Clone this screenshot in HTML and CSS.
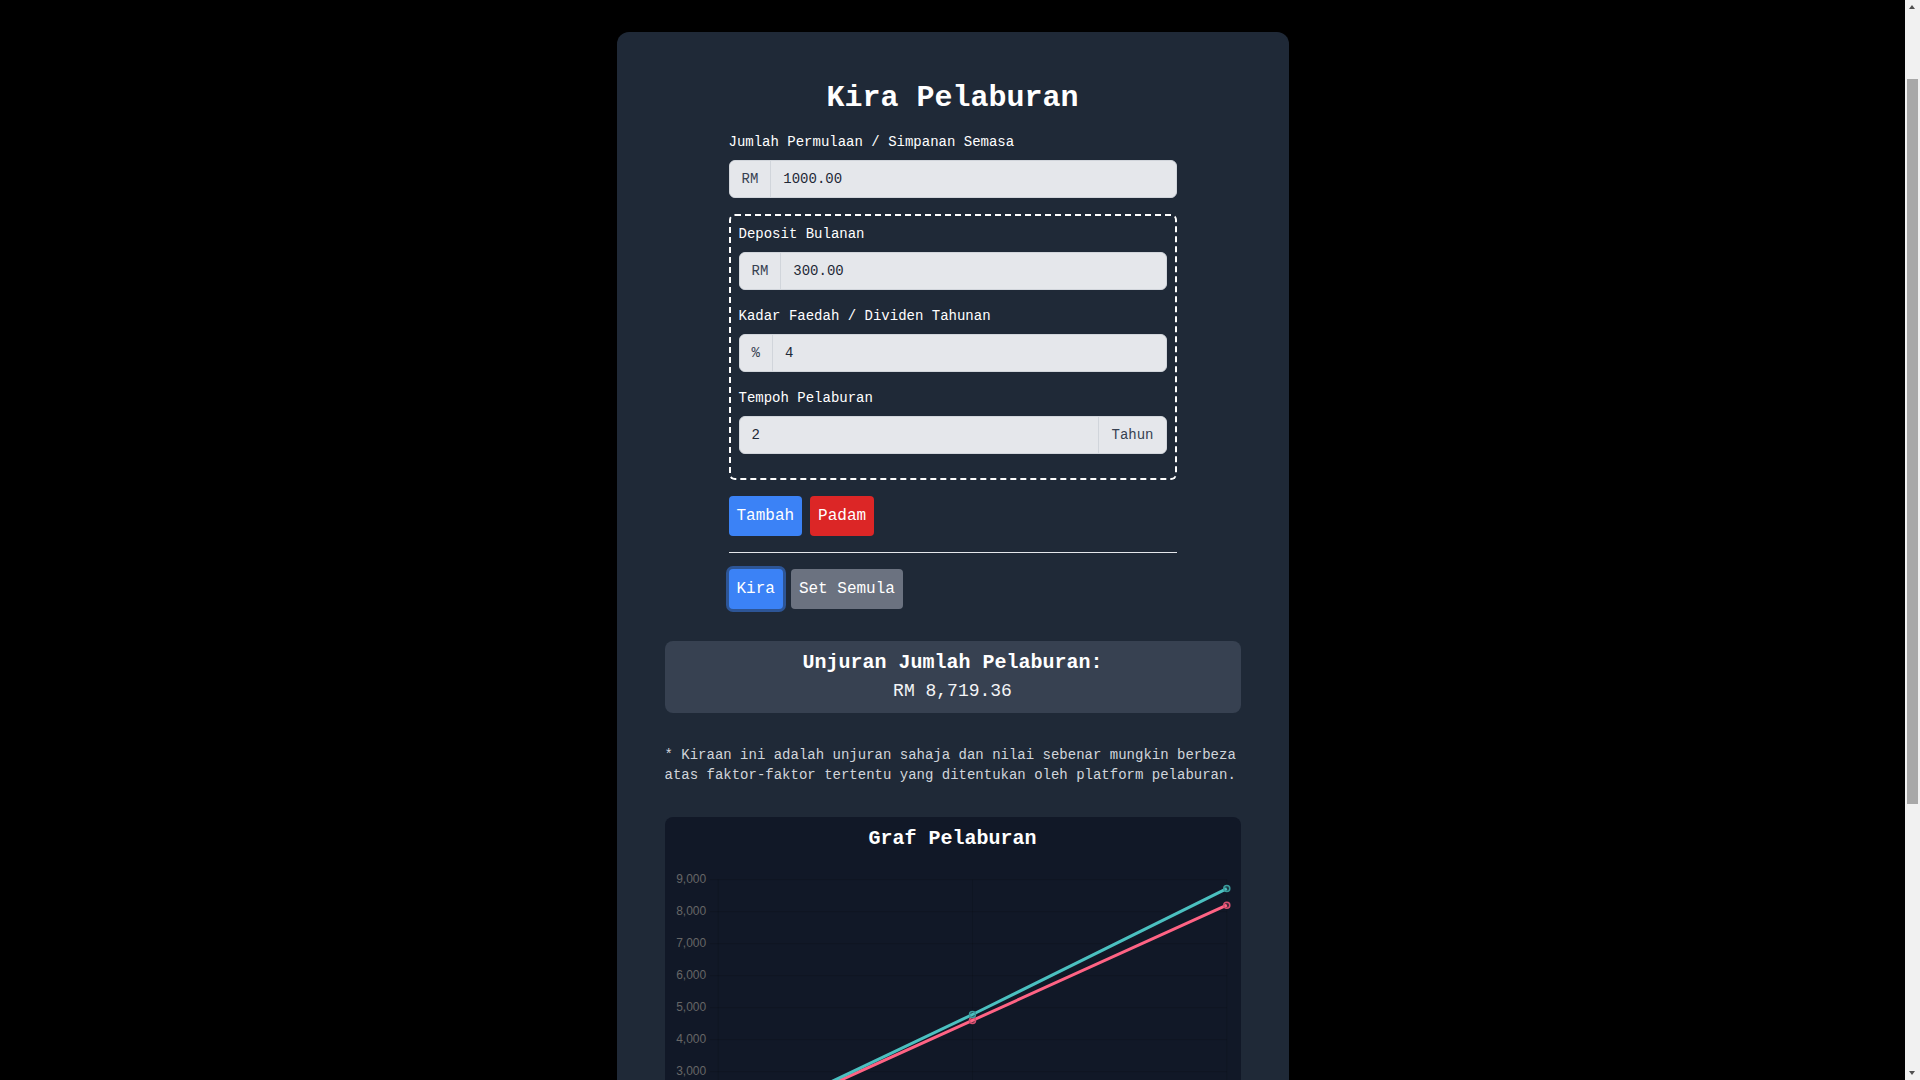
FILE: index.html
```html
<!DOCTYPE html>
<html lang="ms">
<head>
<meta charset="utf-8">
<title>Kira Pelaburan</title>
<link rel="stylesheet" href="styles.css">
</head>
<body>
<main class="card">
  <h1 class="title">Kira Pelaburan</h1>
  <div class="form">
    <div class="field">
      <label class="label">Jumlah Permulaan / Simpanan Semasa</label>
      <div class="group"><span class="addon addon-left">RM</span><input class="input" type="text" value="1000.00"></div>
    </div>
    <div class="dashed">
      <div class="field">
        <label class="label">Deposit Bulanan</label>
        <div class="group"><span class="addon addon-left">RM</span><input class="input" type="text" value="300.00"></div>
      </div>
      <div class="field">
        <label class="label">Kadar Faedah / Dividen Tahunan</label>
        <div class="group"><span class="addon addon-left">%</span><input class="input" type="text" value="4"></div>
      </div>
      <div class="field">
        <label class="label">Tempoh Pelaburan</label>
        <div class="group"><input class="input" type="text" value="2"><span class="addon addon-right">Tahun</span></div>
      </div>
    </div>
    <div class="btn-row">
      <button class="btn btn-blue">Tambah</button>
      <button class="btn btn-red">Padam</button>
    </div>
    <hr class="divider">
    <div class="btn-row">
      <button class="btn btn-blue btn-focus">Kira</button>
      <button class="btn btn-gray">Set Semula</button>
    </div>
  </div>

  <section class="result">
    <h2 class="result-title">Unjuran Jumlah Pelaburan:</h2>
    <p class="result-value">RM 8,719.36</p>
  </section>

  <p class="note">* Kiraan ini adalah unjuran sahaja dan nilai sebenar mungkin berbeza atas faktor-faktor tertentu yang ditentukan oleh platform pelaburan.</p>

  <section class="chart">
    <h2 class="chart-title">Graf Pelaburan</h2>
    <svg class="chart-svg" width="576" height="345" viewBox="0 0 576 345">
      <g stroke="rgba(0,0,0,0.12)" stroke-width="1">
        <line x1="45" y1="30.6" x2="561.8" y2="30.6"/>
        <line x1="45" y1="62.6" x2="561.8" y2="62.6"/>
        <line x1="45" y1="94.6" x2="561.8" y2="94.6"/>
        <line x1="45" y1="126.6" x2="561.8" y2="126.6"/>
        <line x1="45" y1="158.6" x2="561.8" y2="158.6"/>
        <line x1="45" y1="190.6" x2="561.8" y2="190.6"/>
        <line x1="45" y1="222.6" x2="561.8" y2="222.6"/>
        <line x1="45" y1="254.6" x2="561.8" y2="254.6"/>
        <line x1="45" y1="286.6" x2="561.8" y2="286.6"/>
        <line x1="45" y1="318.6" x2="561.8" y2="318.6"/>
        <line x1="53.2" y1="30.6" x2="53.2" y2="326.6"/>
        <line x1="307.5" y1="30.6" x2="307.5" y2="326.6"/>
        <line x1="561.8" y1="30.6" x2="561.8" y2="326.6"/>
      </g>
      <g class="tick" text-anchor="end">
        <text x="41.2" y="34">9,000</text>
        <text x="41.2" y="66">8,000</text>
        <text x="41.2" y="98">7,000</text>
        <text x="41.2" y="130">6,000</text>
        <text x="41.2" y="162">5,000</text>
        <text x="41.2" y="194">4,000</text>
        <text x="41.2" y="226">3,000</text>
        <text x="41.2" y="258">2,000</text>
        <text x="41.2" y="290">1,000</text>
        <text x="41.2" y="322">0</text>
      </g>
      <g class="tick" text-anchor="middle">
        <text x="53.2" y="340">Tahun 0</text>
        <text x="307.5" y="340">Tahun 1</text>
        <text x="561.8" y="340">Tahun 2</text>
      </g>
      <polyline points="53.2,286.6 307.5,171.4 561.8,56.2" fill="none" stroke="rgb(255,99,132)" stroke-width="3"/>
      <polyline points="53.2,286.6 307.5,165.5 561.8,39.6" fill="none" stroke="rgb(75,192,192)" stroke-width="3"/>
      <g fill="rgba(255,99,132,0.2)" stroke="rgb(214,80,112)" stroke-width="1.5">
        <circle cx="53.2" cy="286.6" r="3"/>
        <circle cx="307.5" cy="171.4" r="3"/>
        <circle cx="561.8" cy="56.2" r="3"/>
      </g>
      <g fill="rgba(75,192,192,0.2)" stroke="rgb(58,156,156)" stroke-width="1.5">
        <circle cx="53.2" cy="286.6" r="3"/>
        <circle cx="307.5" cy="165.5" r="3"/>
        <circle cx="561.8" cy="39.6" r="3"/>
      </g>
    </svg>
  </section>
</main>

<div class="scrollbar" aria-hidden="true">
  <span class="sb-arrow sb-up"></span>
  <span class="sb-thumb"></span>
  <span class="sb-arrow sb-down"></span>
</div>
</body>
</html>
```

FILE: styles.css
```css
* {
  box-sizing: border-box;
}

html, body {
  margin: 0;
  background: #000000;
}

body {
  padding: 32px 15px 216px 0;
  font-family: "Liberation Mono", "DejaVu Sans Mono", monospace;
  color: #ffffff;
}

.card {
  width: 672px;
  margin: 0 auto;
  background: #1f2937;
  border-radius: 12px;
  padding: 48px;
}

.title {
  margin: 0 0 16px;
  font-size: 30px;
  line-height: 36px;
  font-weight: 700;
  text-align: center;
  color: #ffffff;
}

.form {
  width: 448px;
  margin: 0 auto;
}

.field {
  margin-bottom: 16px;
}

.label {
  display: block;
  margin-bottom: 8px;
  font-size: 14px;
  line-height: 20px;
  color: #ffffff;
}

.group {
  display: flex;
  align-items: stretch;
  background: #e5e7eb;
  border: 1px solid #d1d5db;
  border-radius: 6px;
  overflow: hidden;
}

.addon {
  flex: none;
  padding: 8px 12px;
  font-size: 14px;
  line-height: 20px;
  color: #374151;
  background: #e5e7eb;
}

.addon-left {
  border-right: 1px solid #d1d5db;
}

.addon-right {
  border-left: 1px solid #d1d5db;
}

.input {
  flex: 1;
  min-width: 0;
  margin: 0;
  border: 0;
  outline: none;
  background: transparent;
  padding: 8px 12px;
  font: inherit;
  font-size: 14px;
  line-height: 20px;
  height: 36px;
  color: #1f2937;
}

.dashed {
  border: 2px dashed #ffffff;
  border-radius: 6px;
  padding: 8px;
  margin-bottom: 16px;
}

.btn-row {
  display: flex;
  gap: 8px;
}

.btn {
  border: 0;
  margin: 0;
  border-radius: 4px;
  padding: 8px;
  font-family: inherit;
  font-size: 16px;
  line-height: 24px;
  color: #ffffff;
  cursor: pointer;
}

.btn-blue {
  background: #3b82f6;
}

.btn-red {
  background: #dc2626;
}

.btn-gray {
  background: #6b7280;
}

.btn-focus {
  box-shadow: 0 0 0 3px rgba(59, 130, 246, 0.5);
}

.divider {
  margin: 16px 0;
  border: 0;
  border-top: 1px solid #e5e7eb;
  height: 0;
}

.result {
  margin-top: 32px;
  background: #374151;
  border-radius: 8px;
  padding: 8px 16px;
  text-align: center;
}

.result-title {
  margin: 0;
  font-size: 20px;
  line-height: 28px;
  font-weight: 700;
  color: #ffffff;
}

.result-value {
  margin: 0;
  font-size: 18px;
  line-height: 28px;
  color: #f3f4f6;
}

.note {
  margin: 32px 0 0;
  font-size: 14px;
  line-height: 20px;
  color: #d1d5db;
}

.chart {
  margin-top: 32px;
  background: #111827;
  border-radius: 8px;
  padding: 10.5px 0 8px;
}

.chart-title {
  margin: 0;
  font-size: 20px;
  line-height: 21px;
  font-weight: 700;
  text-align: center;
  color: #ffffff;
}

.chart-svg {
  display: block;
}

.tick {
  font-family: "Liberation Sans", Arial, sans-serif;
  font-size: 12px;
  fill: #666666;
}

/* imitation of the browser's vertical scrollbar */
.scrollbar {
  position: fixed;
  top: 0;
  right: 0;
  width: 15px;
  height: 100vh;
  background: #f1f1f1;
}

.sb-arrow {
  position: absolute;
  left: 4px;
  width: 0;
  height: 0;
  border-left: 3.5px solid transparent;
  border-right: 3.5px solid transparent;
}

.sb-up {
  top: 5px;
  border-bottom: 4px solid #505050;
}

.sb-down {
  bottom: 5px;
  border-top: 4px solid #505050;
}

.sb-thumb {
  position: absolute;
  left: 2px;
  right: 2px;
  top: 79px;
  height: 725px;
  background: #a8a8a8;
}
```
